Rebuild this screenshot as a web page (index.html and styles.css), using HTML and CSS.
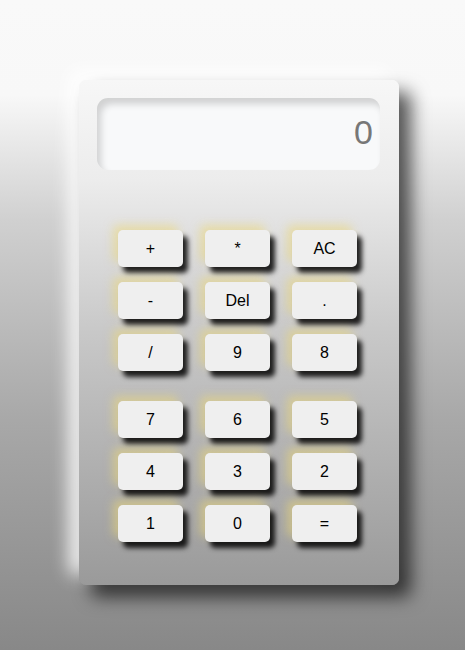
FILE: index.html
```html
<!DOCTYPE html>
<html>
<head>
<meta charset="utf-8">
<link rel="stylesheet" href="styles.css">
</head>
<body>
<div class="calc">
  <div class="display">0</div>
  <div class="keys">
    <button class="key">+</button>
    <button class="key">*</button>
    <button class="key">AC</button>
    <button class="key">-</button>
    <button class="key">Del</button>
    <button class="key">.</button>
    <button class="key">/</button>
    <button class="key">9</button>
    <button class="key">8</button>
  </div>
  <div class="keys second">
    <button class="key">7</button>
    <button class="key">6</button>
    <button class="key">5</button>
    <button class="key">4</button>
    <button class="key">3</button>
    <button class="key">2</button>
    <button class="key">1</button>
    <button class="key">0</button>
    <button class="key">=</button>
  </div>
</div>
</body>
</html>
```
FILE: styles.css
```css
html, body {
  margin: 0;
  height: 650px;
}
body {
  background: linear-gradient(180deg, #f9f9f9 0px, #f8f8f8 95px, #d0d0d0 220px, #a8a8a8 420px, #888 650px);
  font-family: "Liberation Sans", Arial, sans-serif;
  padding: 80px 0 0 79px;
  box-sizing: border-box;
}
.calc {
  width: 320px;
  height: 505px;
  box-sizing: border-box;
  border-radius: 7px;
  background: linear-gradient(180deg, #f7f7f7 0%, #ececec 20%, #c8c8c8 50%, #9a9a9a 100%);
  box-shadow: 12px 12px 18px rgba(0,0,0,0.65), -10px -10px 18px rgba(255,255,255,0.9);
  padding: 18px 19px 0 18px;
}
.display {
  height: 72px;
  border-radius: 11px;
  background: #f8f9fa;
  box-shadow: inset 4px 6px 7px rgba(0,0,0,0.16);
  font-size: 34px;
  color: #777;
  text-align: right;
  padding: 15px 7px 0 0;
  box-sizing: border-box;
}
.keys {
  display: grid;
  grid-template-columns: repeat(3, 65px);
  column-gap: 22px;
  row-gap: 15px;
  margin: 60px 0 0 21px;
}
.keys.second {
  margin-top: 30px;
}
.key {
  width: 65px;
  height: 37px;
  border: none;
  border-radius: 5px;
  background: #efefef;
  font-family: "Liberation Sans", Arial, sans-serif;
  font-size: 16px;
  color: #000;
  padding: 0;
  box-shadow: 5px 6px 5px rgba(0,0,0,0.85), -5px -5px 10px rgba(235,215,120,0.55);
}
```
